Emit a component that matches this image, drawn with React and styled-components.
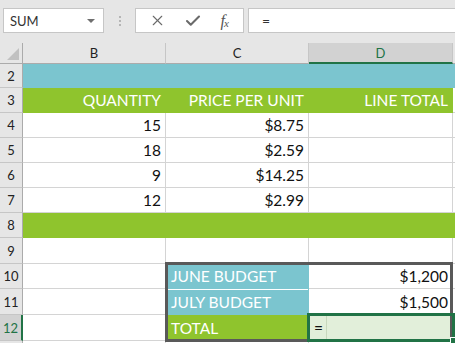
import React from 'react';
import styled, { createGlobalStyle, css } from 'styled-components';
import { X, Check } from 'lucide-react';

const GlobalStyle = createGlobalStyle`
  html, body {
    margin: 0;
    padding: 0;
    background: #e6e6e6;
    overflow: hidden;
  }
  body {
    font-family: Lato, "Open Sans", sans-serif;
  }
`;

const TEAL = '#7bc5cf';
const GREEN = '#8fc42d';
const DARK_GREEN = '#217346';

// sheet rows 2..13, heights in px
const ROW_HEIGHTS = [24, 25, 25, 25, 25, 25, 25, 26, 25, 26, 26, 25];

const Page = styled.div`
  width: 455px;
  height: 343px;
  background: #e6e6e6;
  overflow: hidden;
`;

const Toolbar = styled.div`
  display: flex;
  align-items: center;
  height: 43px;
  padding: 0 0 2px 3px;
  box-sizing: border-box;
`;

const NameBox = styled.div`
  display: flex;
  align-items: center;
  justify-content: space-between;
  width: 101px;
  height: 25px;
  box-sizing: border-box;
  background: #fff;
  border: 1px solid #c6c6c6;
  padding: 0 8px 0 6px;
  font-size: 13px;
  color: #333;
`;

const Caret = styled.span`
  width: 0;
  height: 0;
  border-left: 4px solid transparent;
  border-right: 4px solid transparent;
  border-top: 4px solid #6f6f6f;
`;

const Dots = styled.div`
  display: flex;
  flex-direction: column;
  gap: 2px;
  margin: 0 14px 0 15px;

  span {
    width: 2px;
    height: 2px;
    background: #b5b5b5;
  }
`;

const FxButtons = styled.div`
  display: flex;
  align-items: center;
  justify-content: space-around;
  width: 109px;
  height: 25px;
  box-sizing: border-box;
  background: #fff;
  border: 1px solid #c6c6c6;
  padding: 0 6px 0 4px;
  color: #6a6a6a;
`;

const Fx = styled.span`
  font-family: "Liberation Serif", serif;
  font-style: italic;
  font-size: 16px;
  color: #555;
  letter-spacing: -1px;

  sub {
    font-size: 11px;
    vertical-align: -1px;
  }
`;

const FormulaInput = styled.div`
  flex: 1;
  height: 25px;
  box-sizing: border-box;
  margin-left: 4px;
  background: #fff;
  border: 1px solid #c6c6c6;
  border-right: none;
  padding-left: 13px;
  display: flex;
  align-items: center;
  font-size: 14px;
  color: #333;
`;

const Sheet = styled.div`
  display: grid;
  grid-template-columns: 23px 143px 143px 144px 1fr;
  grid-template-rows: 21px ${ROW_HEIGHTS.map((h) => `${h}px`).join(' ')};
  background: #fff;
`;

const Corner = styled.div`
  grid-column: 1;
  grid-row: 1;
  background: #e6e6e6;
  border-right: 1px solid #ababab;
  border-bottom: 1px solid #ababab;
  position: relative;

  &::after {
    content: '';
    position: absolute;
    right: 3px;
    bottom: 3px;
    width: 0;
    height: 0;
    border-left: 12px solid transparent;
    border-bottom: 12px solid #c1c1c1;
  }
`;

const ColHead = styled.div`
  grid-row: 1;
  display: flex;
  align-items: center;
  justify-content: center;
  background: #e6e6e6;
  border-right: 1px solid #c6c6c6;
  border-bottom: 1px solid #ababab;
  font-size: 13px;
  color: #222;

  ${(p) =>
    p.$active &&
    css`
      background: #d2d2d2;
      color: ${DARK_GREEN};
      border-bottom: 2px solid ${DARK_GREEN};
    `}
`;

const RowHead = styled.div`
  grid-column: 1;
  display: flex;
  align-items: center;
  justify-content: center;
  background: #e6e6e6;
  border-right: 1px solid #ababab;
  border-bottom: 1px solid #c6c6c6;
  font-size: 13px;
  color: #222;

  ${(p) =>
    p.$active &&
    css`
      background: #d2d2d2;
      color: ${DARK_GREEN};
      border-right: 2px solid ${DARK_GREEN};
    `}
`;

const fills = {
  teal: TEAL,
  green: GREEN,
  pale: '#e2efda',
};

const isBand = (fill) => fill === 'teal' || fill === 'green';

const Cell = styled.div`
  display: flex;
  align-items: center;
  justify-content: ${(p) => (p.$left ? 'flex-start' : 'flex-end')};
  padding: ${(p) => (p.$left ? '0 0 0 5px' : '0 4px 0 0')};
  box-sizing: border-box;
  font-size: 15.5px;
  white-space: nowrap;
  overflow: hidden;
  color: ${(p) => (isBand(p.$fill) ? '#fff' : '#111')};
  background: ${(p) => fills[p.$fill] || '#fff'};
  border-right: 1px solid ${(p) => (isBand(p.$fill) ? fills[p.$fill] : '#d4d4d4')};
  border-bottom: 1px solid ${(p) => (isBand(p.$fill) ? fills[p.$fill] : '#d4d4d4')};

  ${(p) =>
    p.$lineTop &&
    css`
      box-shadow: inset 0 1px 0 #fff;
    `}
`;

const RangeBox = styled.div`
  grid-column: 3 / 5;
  grid-row: 10 / 13;
  margin: -2px 0 -1px -1px;
  border: 3px solid #595959;
  pointer-events: none;
`;

const Selection = styled.div`
  grid-column: 4;
  grid-row: 12;
  margin: -2px -2px -1px -2px;
  border: 3px solid ${DARK_GREEN};
  position: relative;
  pointer-events: none;

  &::after {
    content: '';
    position: absolute;
    right: -5px;
    bottom: -5px;
    width: 5px;
    height: 5px;
    background: ${DARK_GREEN};
    border: 1px solid #fff;
  }
`;

const EditCaret = styled.span`
  width: 1px;
  height: 100%;
  background: #c8d8bd;
  margin-left: 3px;
`;

const sheetRows = [
  { n: 2, cells: [{ fill: 'teal' }, { fill: 'teal' }, { fill: 'teal' }, { fill: 'teal' }] },
  {
    n: 3,
    cells: [
      { fill: 'green', text: 'QUANTITY' },
      { fill: 'green', text: 'PRICE PER UNIT' },
      { fill: 'green', text: 'LINE TOTAL' },
      {},
    ],
  },
  { n: 4, cells: [{ text: '15' }, { text: '$8.75' }, {}, {}] },
  { n: 5, cells: [{ text: '18' }, { text: '$2.59' }, {}, {}] },
  { n: 6, cells: [{ text: '9' }, { text: '$14.25' }, {}, {}] },
  { n: 7, cells: [{ text: '12' }, { text: '$2.99' }, {}, {}] },
  { n: 8, cells: [{ fill: 'green' }, { fill: 'green' }, { fill: 'green' }, { fill: 'green' }] },
  { n: 9, cells: [{}, {}, {}, {}] },
  { n: 10, cells: [{}, { fill: 'teal', text: 'JUNE BUDGET', left: true }, { text: '$1,200' }, {}] },
  { n: 11, cells: [{}, { fill: 'teal', text: 'JULY BUDGET', left: true, lineTop: true }, { text: '$1,500' }, {}] },
  { n: 12, cells: [{}, { fill: 'green', text: 'TOTAL', left: true }, { fill: 'pale', text: '=', left: true, edit: true }, {}] },
  // only the top edge of row 13 shows, so its label is left out
  { n: 13, hideLabel: true, cells: [{}, {}, {}, {}] },
];

export default function App() {
  return (
    <Page>
      <GlobalStyle />
      <Toolbar>
        <NameBox>
          SUM
          <Caret />
        </NameBox>
        <Dots>
          <span />
          <span />
          <span />
        </Dots>
        <FxButtons>
          <X size={17} strokeWidth={1.6} />
          <Check size={18} strokeWidth={2.8} />
          <Fx>
            f<sub>x</sub>
          </Fx>
        </FxButtons>
        <FormulaInput>=</FormulaInput>
      </Toolbar>
      <Sheet>
        <Corner />
        <ColHead>B</ColHead>
        <ColHead>C</ColHead>
        <ColHead $active>D</ColHead>
        <ColHead />
        {sheetRows.map((row) => (
          <React.Fragment key={row.n}>
            <RowHead $active={row.n === 12} style={{ gridRow: row.n }}>
              {!row.hideLabel && row.n}
            </RowHead>
            {row.cells.map((c, i) => (
              <Cell
                key={i}
                $fill={c.fill}
                $left={c.left}
                $lineTop={c.lineTop}
                style={{ gridRow: row.n, gridColumn: i + 2 }}
              >
                {c.text}
                {c.edit && <EditCaret />}
              </Cell>
            ))}
          </React.Fragment>
        ))}
        <RangeBox />
        <Selection />
      </Sheet>
    </Page>
  );
}
